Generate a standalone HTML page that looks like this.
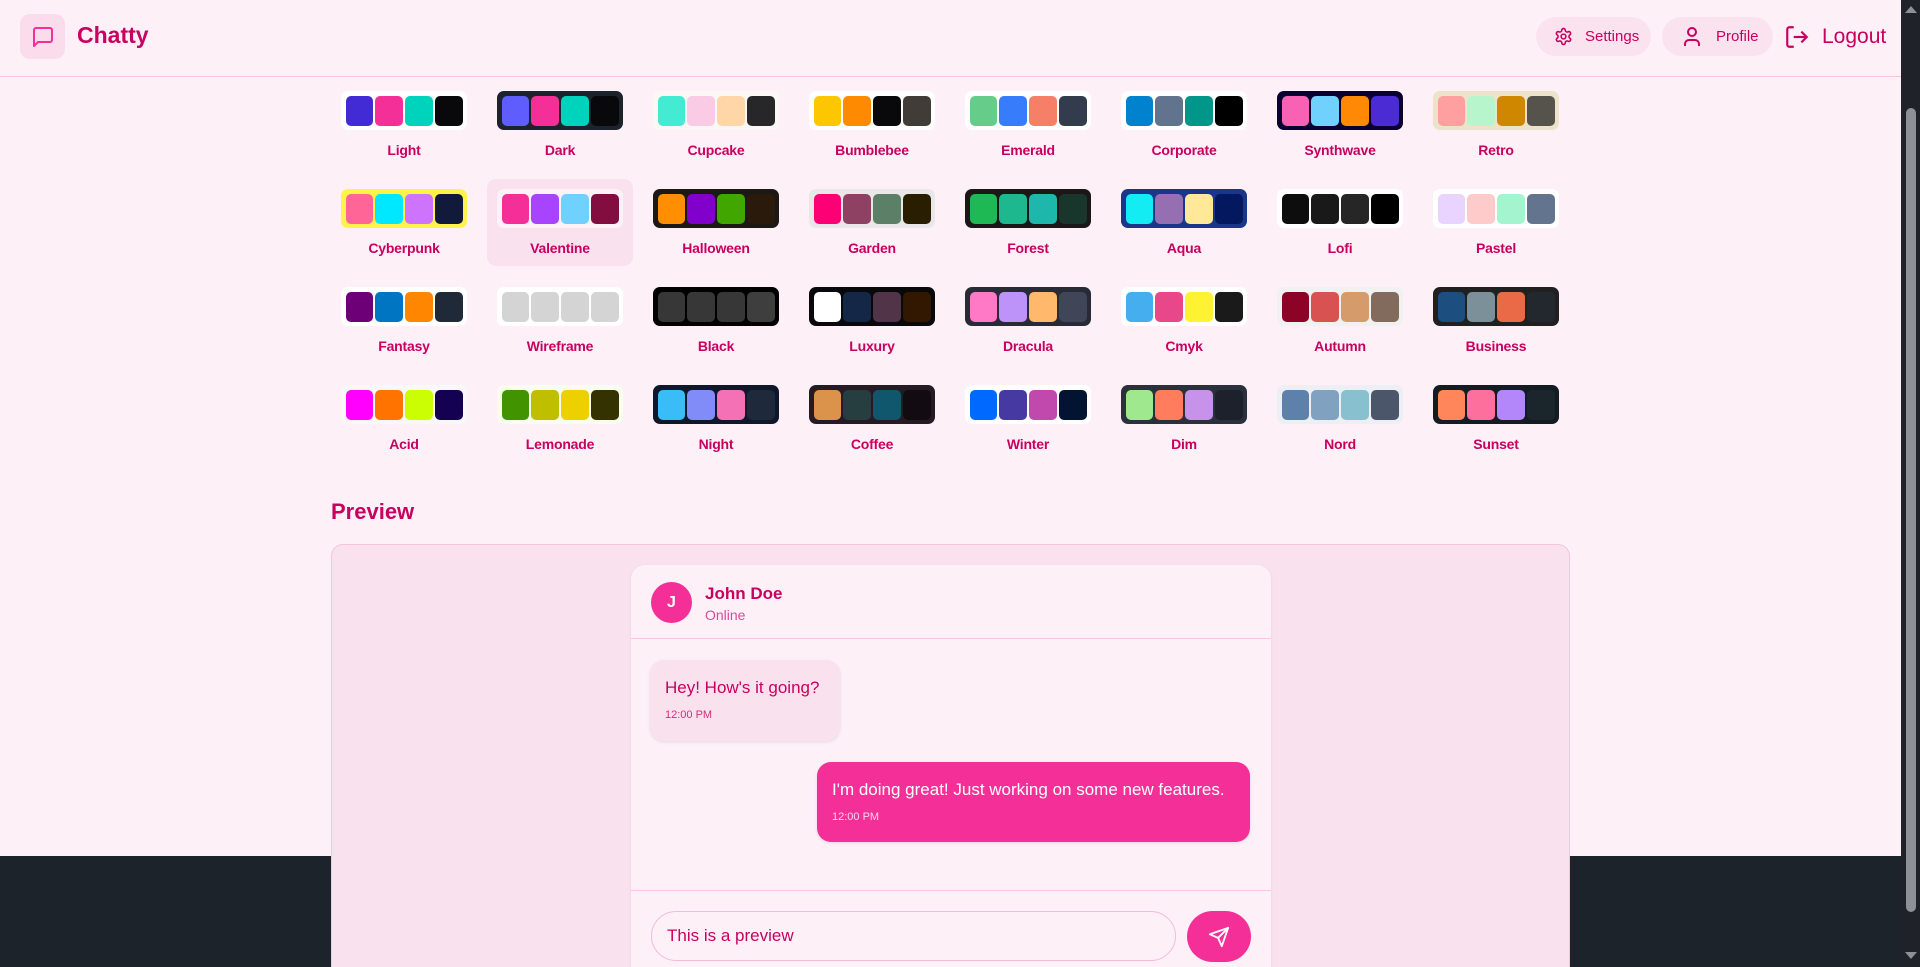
<!DOCTYPE html>
<html style="overflow:hidden;width:1920px;height:967px"><head><meta charset="utf-8"><style>
*{box-sizing:border-box;margin:0;padding:0}
svg{flex-shrink:0}
body{width:1920px;height:967px;overflow:hidden;background:#fdf0f7;font-family:"Liberation Sans",sans-serif;color:#c8005f;position:relative}
.hdr{position:absolute;left:0;top:0;width:1901px;height:77px;border-bottom:1px solid #f9c8df;background:#fdf0f7}
.logo{position:absolute;left:20px;top:14px;width:45px;height:45px;border-radius:10px;background:#fbdcec;display:flex;align-items:center;justify-content:center}
.brand{position:absolute;left:77px;top:22px;font-size:23px;font-weight:bold;color:#c8005f}
.btn{position:absolute;top:17px;height:39px;border-radius:20px;background:#fae2ee;display:flex;align-items:center;gap:12px;padding:0 18px;font-size:15px;color:#c8005f}
.logout{position:absolute;left:1784px;top:24px;display:flex;align-items:center;gap:12px;font-size:21px;color:#c8005f}
.sb{position:absolute;right:0;top:0;width:19px;height:967px;background:#1f2329}
.thumb{position:absolute;left:5px;top:108px;width:10px;height:804px;border-radius:5px;background:#8d9096}
.bot{position:absolute;left:0;top:856px;width:1901px;height:111px;background:#1d232a}
.tile{position:absolute;width:146px;height:87px;border-radius:9px;padding-top:10px}
.tile.sel{background:#f9e2ee}
.sw{margin:0 auto;width:126px;height:39px;border-radius:7px;padding:4.5px;display:flex;gap:2px}
.sw i{flex:1;border-radius:5px}
.lab{text-align:center;font-size:14px;margin-top:12px;color:#c8005f;font-weight:bold;letter-spacing:-0.2px}
.ph{position:absolute;left:331px;top:499px;font-size:22px;font-weight:bold}
.pv{position:absolute;left:331px;top:544px;width:1239px;height:440px;background:#f9e2ee;border:1px solid #f4c4db;border-radius:12px}
.card{position:absolute;left:631px;top:565px;width:640px;height:420px;background:#fdf0f7;border-radius:14px;box-shadow:0 1px 3px rgba(0,0,0,.08)}
.ch{height:74px;border-bottom:1px solid #f6c8dd;position:relative}
.av{position:absolute;left:20px;top:17px;width:41px;height:41px;border-radius:50%;background:#f43098;color:#fff;font-weight:bold;font-size:16px;display:flex;align-items:center;justify-content:center}
.nm{position:absolute;left:74px;top:19px;font-size:17px;font-weight:bold}
.on{position:absolute;left:74px;top:42px;font-size:14px;color:#e0489a}
.b1{position:absolute;left:650px;top:660px;width:190px;height:81px;border-radius:14px;background:#f9e2ee;box-shadow:0 1px 3px rgba(0,0,0,.1);padding:18px 15px;font-size:17px}
.b2{position:absolute;left:817px;top:762px;width:433px;height:80px;border-radius:14px;background:#f43098;color:#fff;box-shadow:0 1px 3px rgba(0,0,0,.1);padding:18px 15px;font-size:17px}
.t{font-size:11px;margin-top:11px;opacity:.8}
.div{position:absolute;left:631px;top:890px;width:640px;height:1px;background:#f6c8dd}
.inp{position:absolute;left:651px;top:911px;width:525px;height:50px;border-radius:25px;border:1px solid #f2bcd5;padding:0 15px;display:flex;align-items:center;font-size:17px;background:#fdf0f7}
.send{position:absolute;left:1187px;top:911px;width:64px;height:51px;border-radius:26px;background:#f43098;display:flex;align-items:center;justify-content:center}
</style></head><body>
<div class="hdr">
<div class="logo"><svg width="24" height="24" viewBox="0 0 24 24" fill="none" stroke="#f43098" stroke-width="2" stroke-linejoin="round"><path d="M21 15a2 2 0 0 1-2 2H7l-4 4V5a2 2 0 0 1 2-2h14a2 2 0 0 1 2 2z"/></svg></div>
<div class="brand">Chatty</div>
<div class="btn" style="left:1536px;width:115px"><svg width="19" height="19" viewBox="0 0 24 24" fill="none" stroke="#c8005f" stroke-width="2"><path d="M12.22 2h-.44a2 2 0 0 0-2 2v.18a2 2 0 0 1-1 1.73l-.43.25a2 2 0 0 1-2 0l-.15-.08a2 2 0 0 0-2.73.73l-.22.38a2 2 0 0 0 .73 2.73l.15.1a2 2 0 0 1 1 1.72v.51a2 2 0 0 1-1 1.74l-.15.09a2 2 0 0 0-.73 2.73l.22.38a2 2 0 0 0 2.730.73l.15-.08a2 2 0 0 1 2 0l.43.25a2 2 0 0 1 1 1.73V20a2 2 0 0 0 2 2h.44a2 2 0 0 0 2-2v-.18a2 2 0 0 1 1-1.73l.43-.25a2 2 0 0 1 2 0l.15.08a2 2 0 0 0 2.73-.73l.22-.39a2 2 0 0 0-.73-2.73l-.15-.08a2 2 0 0 1-1-1.74v-.5a2 2 0 0 1 1-1.74l.15-.09a2 2 0 0 0 .73-2.73l-.22-.38a2 2 0 0 0-2.73-.73l-.15.08a2 2 0 0 1-2 0l-.43-.25a2 2 0 0 1-1-1.73V4a2 2 0 0 0-2-2z"/><circle cx="12" cy="12" r="3"/></svg>Settings</div>
<div class="btn" style="left:1662px;width:111px"><svg width="24" height="24" viewBox="0 0 24 24" fill="none" stroke="#c8005f" stroke-width="2"><path d="M19 21v-2a4 4 0 0 0-4-4H9a4 4 0 0 0-4 4v2"/><circle cx="12" cy="7" r="4"/></svg>Profile</div>
<div class="logout"><svg width="26" height="26" viewBox="0 0 24 24" fill="none" stroke="#c8005f" stroke-width="2"><path d="M9 21H5a2 2 0 0 1-2-2V5a2 2 0 0 1 2-2h4"/><path d="M16 17l5-5-5-5"/><path d="M21 12H9"/></svg>Logout</div>
</div>
<div class="bot"></div>
<div class="sb"><div style="position:absolute;left:4px;top:6px;border-left:6px solid transparent;border-right:6px solid transparent;border-bottom:7px solid #8d9096"></div><div class="thumb"></div><div style="position:absolute;left:4px;top:952px;border-left:6px solid transparent;border-right:6px solid transparent;border-top:7px solid #8d9096"></div></div>
<div id="g"></div>
<div class="ph">Preview</div>
<div class="pv"></div>
<div class="card"><div class="ch"><div class="av">J</div><div class="nm">John Doe</div><div class="on">Online</div></div></div>
<div class="b1">Hey! How's it going?<div class="t">12:00 PM</div></div>
<div class="b2">I'm doing great! Just working on some new features.<div class="t">12:00 PM</div></div>
<div class="div"></div>
<div class="inp">This is a preview</div>
<div class="send"><svg width="22" height="22" viewBox="0 0 24 24" fill="none" stroke="#fff" stroke-width="2" stroke-linejoin="round"><path d="M22 2L11 13"/><path d="M22 2l-7 20-4-9-9-4z"/></svg></div>
<script>
var T=[["Light","#fff","#422ad5","#f43098","#00d3bb","#09090b"],["Dark","#1d232a","#605dff","#f43098","#00d3bb","#09090b"],["Cupcake","#faf7f5","#44ebd3","#f9cbe5","#ffd6a7","#27272a"],["Bumblebee","#fff","#fdc700","#fd8a00","#09090b","#413c37"],["Emerald","#fff","#66cc8a","#377cfb","#f68067","#333c4d"],["Corporate","#fff","#0082ce","#61738d","#009689","#000"],["Synthwave","#09002f","#f861b4","#71d1fe","#ff8904","#4a2bd4"],["Retro","#ece3ca","#ff9fa0","#b7f6cd","#d08700","#56524c"],
["Cyberpunk","#fff248","#ff6596","#00e8ff","#ce74fc","#111a3b"],["Valentine","#fcf2f8","#f43098","#a844fd","#71d1fe","#820d3f"],["Halloween","#1b1816","#ff8f00","#8200cb","#41a700","#2a1a0c"],["Garden","#e9e7e7","#fe0075","#8e4162","#5c7f67","#291e00"],["Forest","#1b1717","#1eb854","#1db88e","#1db8ab","#19362d"],["Aqua","#1a368b","#13ecf3","#966fb3","#ffe999","#03185f"],["Lofi","#fff","#0d0d0d","#1a1919","#262626","#000"],["Pastel","#fff","#e9d4ff","#fecaca","#a4f4cf","#62748e"],
["Fantasy","#fff","#6d0076","#0075c2","#ff8600","#1f2937"],["Wireframe","#fff","#d4d4d4","#d4d4d4","#d4d4d4","#d4d4d4"],["Black","#000","#373737","#373737","#373737","#3e3e3e"],["Luxury","#09090b","#fff","#152747","#513448","#331800"],["Dracula","#282a36","#ff79c6","#bd93f9","#ffb86c","#414558"],["Cmyk","#fff","#45aeee","#e8488a","#fff232","#1a1a1a"],["Autumn","#f1f1f1","#8c0327","#d85251","#d59b6a","#826a5c"],["Business","#202020","#1c4e80","#7c909a","#ea6947","#23282e"],
["Acid","#f8f8f8","#ff00ff","#ff7400","#cbfd03","#140151"],["Lemonade","#f8fdef","#419400","#bfbf00","#edd000","#343300"],["Night","#0f172a","#3abdf7","#818cf8","#f471b5","#1e293b"],["Coffee","#261b25","#db924b","#263e3f","#10576d","#120c12"],["Winter","#fff","#0069ff","#463aa2","#c148ac","#021431"],["Dim","#2a303c","#9fe88d","#ff7d5c","#c792e9","#1c212b"],["Nord","#eceff4","#5e81ac","#81a1c1","#88c0d0","#4c566a"],["Sunset","#121c22","#ff865b","#fd6f9c","#b387fa","#1b262c"]];
var h="";T.forEach(function(t,i){var c=i%8,r=Math.floor(i/8);h+='<div class="tile'+(i==9?' sel':'')+'" style="left:'+(331+c*156)+'px;top:'+(81+r*98)+'px"><div class="sw" style="background:'+t[1]+'"><i style="background:'+t[2]+'"></i><i style="background:'+t[3]+'"></i><i style="background:'+t[4]+'"></i><i style="background:'+t[5]+'"></i></div><div class="lab">'+t[0]+'</div></div>';});
document.getElementById("g").innerHTML=h;
</script>
</body></html>
